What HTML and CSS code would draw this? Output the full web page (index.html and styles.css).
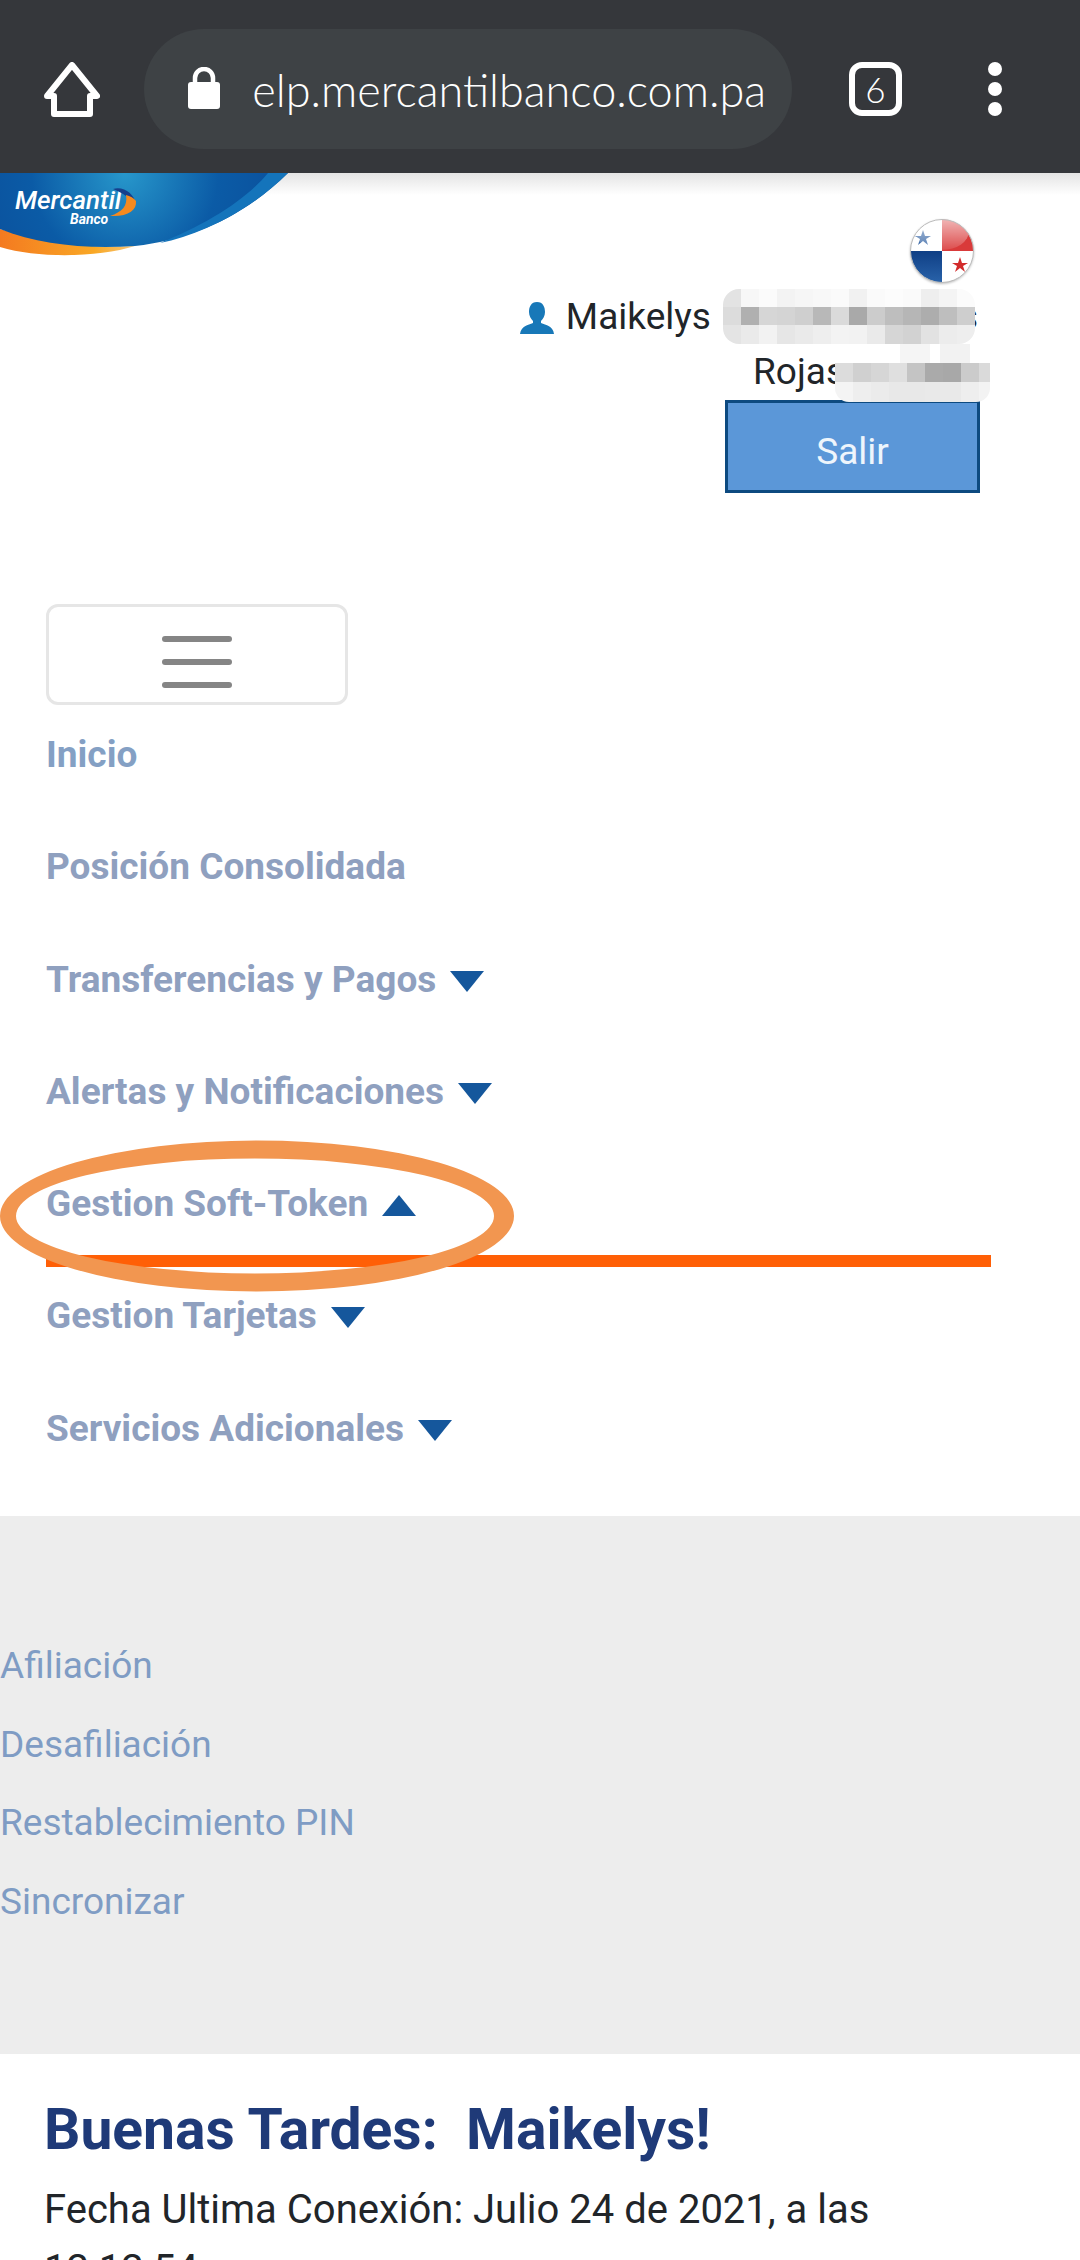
FILE: index.html
```html
<!DOCTYPE html>
<html lang="es">
<head>
<meta charset="utf-8">
<title>Mercantil Banco</title>
<link rel="stylesheet" href="styles.css">
</head>
<body>
<div class="page">
  <header class="toolbar">
    <svg class="home" width="56" height="56" viewBox="0 0 56 56"><path d="M28 3 L53 34 H46 V52 H10 V34 H3 Z" fill="none" stroke="#fff" stroke-width="6" stroke-linejoin="round"/></svg>
    <div class="pill">
      <svg class="lock" width="32" height="42" viewBox="0 0 32 42"><path d="M7 16 V11 A9 9 0 0 1 25 11 V16" fill="none" stroke="#fff" stroke-width="4.5"/><rect x="0" y="15" width="32" height="27" rx="3" fill="#fff"/></svg>
      <div class="url"><span>help.mercantilbanco.com.pa</span></div>
    </div>
    <div class="tabs">6</div>
    <div class="dots"><i></i><i></i><i></i></div>
  </header>
  <div class="top-shadow"></div>

  <section class="head">
    <svg class="logo" width="290" height="84" viewBox="0 0 290 84">
      <defs>
        <radialGradient id="lg" gradientUnits="userSpaceOnUse" cx="125" cy="0" r="170"><stop offset="0" stop-color="#2797cb"/><stop offset="0.55" stop-color="#0b5ba6"/><stop offset="1" stop-color="#0b4f9b"/></radialGradient>
        <linearGradient id="og" x1="0" x2="1"><stop offset="0" stop-color="#f47a20"/><stop offset="0.7" stop-color="#f9a825"/><stop offset="1" stop-color="#f7c67a"/></linearGradient>
      </defs>
      <path d="M0 56 C45 70 90 76 135 73 C100 84 40 86 0 74 Z" fill="url(#og)"/>
      <path d="M0 0 H288 C245 42 195 66 135 73 C85 76 40 72 0 56 Z" fill="url(#lg)"/>
      <path d="M268 0 H288 C250 38 200 62 160 70 C205 52 245 28 268 0Z" fill="#1474bb"/>
      <text class="logo-name" x="15" y="36">Mercantil</text>
      <text class="logo-sub" x="70" y="51">Banco</text>
      <path d="M113 16 C124 13 134 21 136 31 C130 25 124 21 113 16Z" fill="#163f8c"/>
      <path d="M136 28 C137 37 128 44 110 43 C122 39 128 33 126 22 C130 23 134 25 136 28Z" fill="#f58a1f"/>
    </svg>
    <div class="user">
      <svg class="flag" width="66" height="66" viewBox="0 0 66 66">
        <defs>
          <clipPath id="fc"><circle cx="33" cy="33" r="31.5"/></clipPath>
          <linearGradient id="gloss" x1="0" x2="0" y1="0" y2="1"><stop offset="0" stop-color="#fff" stop-opacity=".75"/><stop offset="1" stop-color="#fff" stop-opacity=".1"/></linearGradient>
          <linearGradient id="blueq" x1="0" x2="0" y1="0" y2="1"><stop offset="0" stop-color="#0f3f85"/><stop offset="1" stop-color="#2a64ab"/></linearGradient>
        </defs>
        <g clip-path="url(#fc)">
          <rect width="66" height="66" fill="#fff"/>
          <rect x="33" y="0" width="33" height="33" fill="#d93a3a"/>
          <rect x="0" y="33" width="33" height="33" fill="url(#blueq)"/>
          <polygon points="14,12 16,18 22,18 17,21 19,27 14,23 9,27 11,21 6,18 12,18" fill="#3e6ba8"/>
          <polygon points="51,39 53,45 59,45 54,48 56,54 51,50 46,54 48,48 43,45 49,45" fill="#d22b2b"/>
          <ellipse cx="33" cy="13" rx="27" ry="19" fill="url(#gloss)"/>
        </g>
        <circle cx="33" cy="33" r="31.5" fill="none" stroke="#bbb" stroke-width="1"/>
      </svg>
      <div class="name-row">
        <svg class="person" width="34" height="32" viewBox="0 0 34 32"><path d="M17 0 C23 0 25 5 25 10 C25 14 23 17 21 19 V21 C26 23 33 24 34 32 H0 C1 24 8 23 13 21 V19 C11 17 9 14 9 10 C9 5 11 0 17 0Z" fill="#1878b8"/></svg>
        <span class="first">Maikelys</span>
        <svg class="mosaic-a" width="252" height="55" viewBox="0 0 252 55">
          <defs><clipPath id="ma"><rect width="252" height="55" rx="16"/></clipPath></defs>
          <g clip-path="url(#ma)">
            <rect width="18" height="18" fill="#e3e3e3"/><rect x="18" width="18" height="18" fill="#f7f7f7"/><rect x="36" width="18" height="18" fill="#fbfbfb"/><rect x="54" width="18" height="18" fill="#f3f3f3"/><rect x="72" width="18" height="18" fill="#f6f6f6"/><rect x="90" width="18" height="18" fill="#f8f8f8"/><rect x="108" width="18" height="18" fill="#fafafa"/><rect x="126" width="18" height="18" fill="#f1f1f1"/><rect x="144" width="18" height="18" fill="#fafafa"/><rect x="162" width="18" height="18" fill="#fcfcfc"/><rect x="180" width="18" height="18" fill="#fafafa"/><rect x="198" width="18" height="18" fill="#eeeeee"/><rect x="216" width="18" height="18" fill="#f4f4f4"/><rect x="234" width="18" height="18" fill="#fbfbfb"/>
            <rect y="18" width="18" height="18" fill="#dcdcdc"/><rect x="18" y="18" width="18" height="18" fill="#b0b0b0"/><rect x="36" y="18" width="18" height="18" fill="#d6d6d6"/><rect x="54" y="18" width="18" height="18" fill="#d4d4d4"/><rect x="72" y="18" width="18" height="18" fill="#cfcfcf"/><rect x="90" y="18" width="18" height="18" fill="#b8b8b8"/><rect x="108" y="18" width="18" height="18" fill="#dadada"/><rect x="126" y="18" width="18" height="18" fill="#a9a9a9"/><rect x="144" y="18" width="18" height="18" fill="#cccccc"/><rect x="162" y="18" width="18" height="18" fill="#bebebe"/><rect x="180" y="18" width="18" height="18" fill="#b6b6b6"/><rect x="198" y="18" width="18" height="18" fill="#adadad"/><rect x="216" y="18" width="18" height="18" fill="#bebebe"/><rect x="234" y="18" width="18" height="18" fill="#cecece"/>
            <rect y="36" width="18" height="19" fill="#e4e4e4"/><rect x="18" y="36" width="18" height="19" fill="#eaeaea"/><rect x="36" y="36" width="18" height="19" fill="#f2f2f2"/><rect x="54" y="36" width="18" height="19" fill="#e6e6e6"/><rect x="72" y="36" width="18" height="19" fill="#eaeaea"/><rect x="90" y="36" width="18" height="19" fill="#eeeeee"/><rect x="108" y="36" width="18" height="19" fill="#f3f3f3"/><rect x="126" y="36" width="18" height="19" fill="#f2f2f2"/><rect x="144" y="36" width="18" height="19" fill="#eaeaea"/><rect x="162" y="36" width="18" height="19" fill="#d6d6d6"/><rect x="180" y="36" width="18" height="19" fill="#d2d2d2"/><rect x="198" y="36" width="18" height="19" fill="#e2e2e2"/><rect x="216" y="36" width="18" height="19" fill="#ececec"/><rect x="234" y="36" width="18" height="19" fill="#eeeeee"/>
          </g>
        </svg>
        <span class="tail">s</span>
      </div>
      <div class="name-row second">
        <span>Rojas</span>
        <svg class="mosaic-b" width="155" height="58" viewBox="0 0 155 58">
          <defs><clipPath id="mb"><rect width="155" height="58" rx="14"/></clipPath></defs>
          <g clip-path="url(#mb)">
            <rect width="155" height="19" fill="#fff"/><rect x="65" width="30" height="19" fill="#f5f5f5"/><rect x="105" width="30" height="19" fill="#f2f2f2"/>
            <rect y="19" width="18" height="19" fill="#dcdcdc"/><rect x="18" y="19" width="18" height="19" fill="#d0d0d0"/><rect x="36" y="19" width="18" height="19" fill="#d6d6d6"/><rect x="54" y="19" width="18" height="19" fill="#dfdfdf"/><rect x="72" y="19" width="18" height="19" fill="#c4c4c4"/><rect x="90" y="19" width="18" height="19" fill="#aaaaaa"/><rect x="108" y="19" width="18" height="19" fill="#a8a8a8"/><rect x="126" y="19" width="18" height="19" fill="#cbcbcb"/><rect x="144" y="19" width="11" height="19" fill="#dadada"/>
            <rect y="38" width="18" height="20" fill="#f4f4f4"/><rect x="18" y="38" width="18" height="20" fill="#eeeeee"/><rect x="36" y="38" width="18" height="20" fill="#ebebeb"/><rect x="54" y="38" width="36" height="20" fill="#e8e8e8"/><rect x="90" y="38" width="36" height="20" fill="#e9e9e9"/><rect x="126" y="38" width="18" height="20" fill="#eeeeee"/><rect x="144" y="38" width="11" height="20" fill="#f3f3f3"/>
          </g>
        </svg>
      </div>
      <button class="salir">Salir</button>
    </div>
  </section>

  <div class="burger"><i></i><i></i><i></i></div>

  <nav>
    <ul class="menu">
      <li class="item first-item"><a>Inicio</a></li>
      <li class="item"><a>Posición Consolidada</a></li>
      <li class="item"><a>Transferencias y Pagos</a><b class="down"></b></li>
      <li class="item"><a>Alertas y Notificaciones</a><b class="down"></b></li>
      <li class="item active"><a>Gestion Soft-Token</a><b class="up"></b></li>
      <li class="item"><a>Gestion Tarjetas</a><b class="down"></b></li>
      <li class="item"><a>Servicios Adicionales</a><b class="down"></b></li>
    </ul>
  </nav>

  <section class="submenu">
    <a>Afiliación</a>
    <a>Desafiliación</a>
    <a>Restablecimiento PIN</a>
    <a>Sincronizar</a>
  </section>

  <section class="greet">
    <h1>Buenas Tardes:&nbsp; Maikelys!</h1>
    <p>Fecha Ultima Conexión: Julio 24 de 2021, a las 12:12:54</p>
  </section>

  <svg class="circle" width="514" height="152" viewBox="0 0 514 152"><path fill-rule="evenodd" fill="#f29650" d="M0 76 A257 75.5 0 1 1 514 76 A257 75.5 0 1 1 0 76Z M16 76 A239 57.5 0 1 0 494 76 A239 57.5 0 1 0 16 76Z"/></svg>
</div>
</body>
</html>
```
FILE: styles.css
```css
* { box-sizing: border-box; }
html, body { margin: 0; padding: 0; background: #fff; }
body { font-family: Roboto, "Liberation Sans", sans-serif; color: #212529; }
.page { position: relative; width: 1080px; height: 2260px; overflow: hidden; }

.toolbar { height: 173px; background: #35373b; display: flex; align-items: center; }
.home { margin-left: 44px; margin-right: 44px; flex: none; margin-top: 6px; }
.pill { width: 648px; height: 120px; margin-top: 5px; border-radius: 60px; background: #3e4245; display: flex; align-items: center; padding-left: 44px; flex: none; }
.lock { flex: none; margin-top: -2px; }
.url { width: 515px; margin-left: 31px; padding-top: 2px; overflow: hidden; display: flex; justify-content: flex-end; font-family: Lato, Roboto, sans-serif; font-weight: 300; font-size: 45px; color: #fff; white-space: nowrap; }
.url span { flex: none; }
.tabs { width: 53px; height: 54px; margin-left: 57px; margin-top: 4px; border: 6px solid #fff; border-radius: 13px; color: #fff; font-family: Lato, sans-serif; font-weight: 300; font-size: 35px; display: flex; align-items: center; justify-content: center; flex: none; }
.dots { margin-left: 86px; margin-top: 4px; display: flex; flex-direction: column; gap: 6px; }
.dots i { display: block; width: 14px; height: 14px; border-radius: 50%; background: #fff; }

.top-shadow { position: absolute; left: 0; top: 173px; width: 100%; height: 22px; background: linear-gradient(#e4e4e4, rgba(255,255,255,0)); z-index: 1; }

.head { height: 431px; display: flex; justify-content: space-between; align-items: flex-start; padding-right: 100px; }
.logo { display: block; flex: none; position: relative; z-index: 2; }
.logo-name { font: italic 500 26px Roboto, sans-serif; fill: #fff; }
.logo-sub { font: italic 700 14px Roboto, sans-serif; fill: #fff; }

.user { display: flex; flex-direction: column; align-items: flex-end; padding-top: 45px; }
.flag { display: block; margin-right: 5px; margin-bottom: 5px; filter: drop-shadow(0 1px 1px rgba(0,0,0,.25)); }
.name-row { height: 55px; display: flex; align-items: center; font-size: 37px; line-height: 55px; white-space: nowrap; }
.person { flex: none; margin-right: 12px; margin-top: 2px; }
.first { margin-right: 12px; }
.mosaic-a { display: block; flex: none; position: relative; z-index: 2; }
.tail { margin-left: -16px; margin-right: 2px; }
.mosaic-b { display: block; flex: none; margin-left: -10px; margin-right: -10px; margin-top: 3px; position: relative; z-index: 2; }
.salir { width: 255px; height: 93px; margin-top: 1px; padding: 9px 0 0; border: 3px solid #0d4a80; background: #5b97d8; color: #eef5fc; font: 400 37px Roboto, sans-serif; text-align: center; }

.burger { width: 302px; height: 101px; margin-left: 46px; border: 3px solid #e6e6e6; border-radius: 12px; display: flex; flex-direction: column; align-items: center; justify-content: center; gap: 17px; padding-top: 15px; }
.burger i { display: block; width: 70px; height: 6px; border-radius: 3px; background: #858585; }

.menu { list-style: none; margin: 22px 0 0 46px; padding: 0; display: flex; flex-direction: column; gap: 56.25px; height: 789px; }
.item { position: relative; height: 56px; display: flex; align-items: center; font-size: 37px; font-weight: 700; line-height: 56px; color: #8fa0bf; white-space: nowrap; }
.first-item { color: #84a0c4; }
.down, .up { display: block; width: 0; height: 0; margin-left: 14px; border-left: 17px solid transparent; border-right: 17px solid transparent; }
.down { border-top: 21px solid #15579c; margin-top: 3px; }
.up { border-bottom: 21px solid #15579c; margin-top: 2px; }
.active::after { content: ""; position: absolute; left: 0; width: 945px; top: 79px; height: 12px; background: #ff5f06; }

.submenu { height: 538px; background: #ededed; display: flex; flex-direction: column; justify-content: flex-start; padding-top: 122px; gap: 23.7px; font-size: 37px; line-height: 55px; color: #7f9cc4; }
.submenu a { display: block; }

.greet { padding: 43px 44px 0; }
.greet h1 { margin: 0; font-size: 57px; line-height: 66px; font-weight: 700; color: #1f3a78; }
.greet p { margin: 17px 0 0; width: 900px; font-size: 40px; line-height: 60px; color: #212529; }

.circle { position: absolute; left: 0; top: 1140px; display: block; z-index: 3; }
```
